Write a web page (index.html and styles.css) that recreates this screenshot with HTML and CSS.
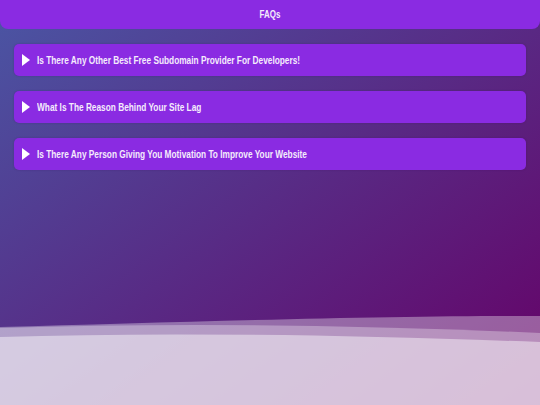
FILE: index.html
```html
<!DOCTYPE html>
<html>
<head>
<meta charset="utf-8">
<link rel="stylesheet" href="styles.css">
</head>
<body>
<div class="page">
  <header class="top"><span class="title">FAQs</span></header>
  <main class="faqs">
    <div class="faq"><span class="arrow"></span><span class="q">Is There Any Other Best Free Subdomain Provider For Developers!</span></div>
    <div class="faq"><span class="arrow"></span><span class="q">What Is The Reason Behind Your Site Lag</span></div>
    <div class="faq"><span class="arrow"></span><span class="q">Is There Any Person Giving You Motivation To Improve Your Website</span></div>
  </main>
  <svg class="waves" viewBox="0 0 540 95" preserveAspectRatio="none">
    <path d="M0,17 C180,12 400,5 540,6 L540,95 L0,95 Z" fill="#fff" fill-opacity="0.35"/>
    <path d="M0,18 Q250,10 540,23 L540,95 L0,95 Z" fill="#fff" fill-opacity="0.3"/>
    <path d="M0,27 Q220,20 540,32 L540,95 L0,95 Z" fill="#fff" fill-opacity="0.45"/>
  </svg>
</div>
</body>
</html>
```
FILE: styles.css
```css
html, body {
  margin: 0;
  padding: 0;
}
body {
  width: 540px;
  height: 405px;
  overflow: hidden;
  font-family: "Liberation Sans", Arial, sans-serif;
}
.page {
  position: relative;
  width: 540px;
  height: 405px;
  background: linear-gradient(to bottom right, #4a56a4, #660066);
}
.top {
  height: 29px;
  background: #8a2be2;
  border-radius: 0 0 8px 8px;
  display: flex;
  align-items: center;
  justify-content: center;
}
.title {
  color: #f5ecfc;
  font-weight: bold;
  font-size: 10px;
  transform: scaleX(0.8);
}
.faqs {
  display: flex;
  flex-direction: column;
  gap: 15px;
  padding: 15px 14px 0 14px;
}
.faq {
  height: 32px;
  background: #8a2be2;
  border-radius: 5px;
  display: flex;
  align-items: center;
  padding-left: 8px;
  box-shadow: 0 0 2px rgba(60, 0, 90, 0.3);
}
.arrow {
  flex: none;
  width: 0;
  height: 0;
  border-top: 6.5px solid transparent;
  border-bottom: 6.5px solid transparent;
  border-left: 8px solid #fff;
  margin-right: 7px;
}
.q {
  color: #f5ecfc;
  font-weight: bold;
  font-size: 10px;
  white-space: nowrap;
  transform: scaleX(0.83);
  transform-origin: left center;
}
.waves {
  position: absolute;
  left: 0;
  bottom: 0;
  width: 540px;
  height: 95px;
  display: block;
}
```
